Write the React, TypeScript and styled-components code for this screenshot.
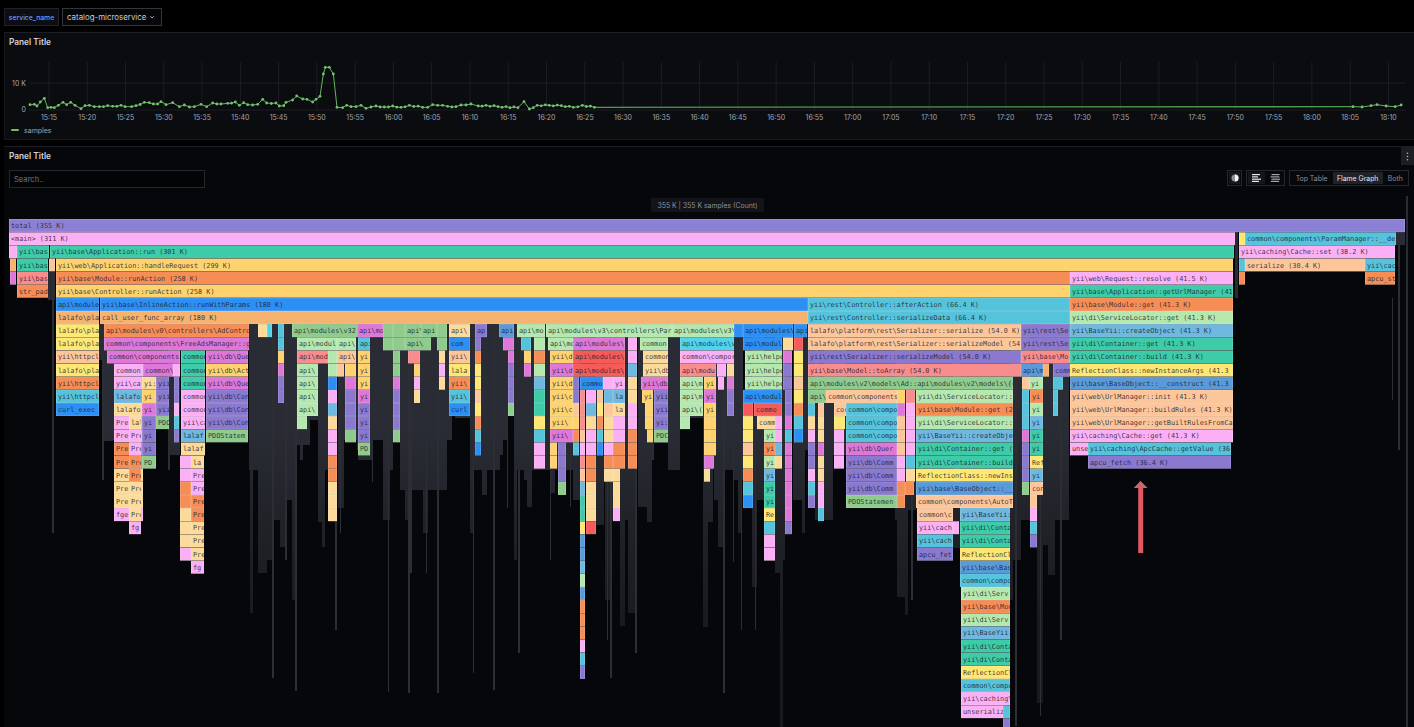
import React from 'react';
import styled, { createGlobalStyle } from 'styled-components';

const GlobalStyle = createGlobalStyle`
  html, body {
    margin: 0;
    background: #000;
    font-family: Inter, "Liberation Sans", sans-serif;
    overflow: hidden;
  }
`;

// ---- time series ----
const TICK_COUNT = 36;
const tickX = (i: number) => 48 + 38.27 * i;
const tickLabel = (i: number) => {
  const total = 15 * 60 + 15 + i * 5;
  return `${Math.floor(total / 60)}:${String(total % 60).padStart(2, '0')}`;
};

// traced from the reference, in 3x crop units
const SERIES_A = [87,314,100,313,108,318,118,306,130,295,140,323,150,322,160,323,172,316,186,307,197,314,209,307,222,316,240,326,252,317,265,316,280,320,295,320,320,317,335,319,360,316,372,320,392,320,405,317,430,307,445,308,457,312,470,312,480,305,495,314,515,308,535,320,550,315,565,321,580,320,600,313,617,320,635,309,660,312,680,310,703,306,715,316,728,308,740,314,770,313,785,298,797,309,825,309,835,318,848,317,855,307,875,300,887,288,905,297,918,298,935,306,945,298,957,289,967,222,973,202,985,202,997,222,1008,322,1025,323,1037,316,1050,320,1065,320,1080,316,1095,325,1110,321,1125,318,1150,321,1175,318,1200,322,1225,316,1265,322,1280,322,1295,314,1310,316,1325,316,1340,319,1365,320,1380,315,1410,312];
const SERIES_B = [12,318,25,316,45,320,78,323,88,305,97,327,110,316,130,316,150,317,170,322,185,316,205,322];
const SERIES_C = [1465,320,1480,321,1495,317,1505,314,1520,318,1535,320,1545,315];

// the crops only give the turning points, so put the missing samples back in between
const densify = (pts: [number, number][]) => {
  const out: [number, number][] = [];
  pts.forEach((p, i) => {
    const next = pts[i + 1];
    out.push(p);
    if (!next) return;
    const steps = Math.floor((next[0] - p[0]) / 3.8);
    for (let s = 1; s < steps; s++) {
      const t = s / steps;
      out.push([p[0] + (next[0] - p[0]) * t, p[1] + (next[1] - p[1]) * t + (s % 2 ? 0.5 : -0.5)]);
    }
  });
  return out;
};

const toPoints = () => {
  const pts: [number, number][] = [];
  for (let i = 0; i < SERIES_A.length; i += 2) pts.push([SERIES_A[i] / 3, SERIES_A[i + 1] / 3]);
  for (let i = 0; i < SERIES_B.length; i += 2) pts.push([470 + SERIES_B[i] / 1.661, SERIES_B[i + 1] / 3]);
  return densify(pts);
};
const toTail = () => {
  const pts: [number, number][] = [];
  for (let i = 0; i < SERIES_C.length; i += 2) pts.push([470 + SERIES_C[i] / 1.661, SERIES_C[i + 1] / 3]);
  return pts;
};

// ---- flame graph ----
const COLORS: Record<string, string> = {
  v: '#8c7fd6', P: '#fbb0f5', T: '#3dcba8', Y: '#fdd26f', O: '#f68d55', B: '#2c8ff4',
  A: '#f6b26f', L: '#b5e8ae', G: '#8ecb8c', E: '#fdc69a', C: '#55c3db', S: '#6fb8e0',
  R: '#f98c8c', r: '#f55b58', M: '#5a9ad9', m: '#de78d8', y: '#fee873', U: '#8a79cf',
  t: '#fcdb9a', c: '#50d4ee',
};

const ROW_TOP = 219;
const ROW_H = 13.14;
const CHAR_W = 4.12;

// row x0 x1 then the frames going down from that row, split by |
const FRAMES = String.raw`
0 9 1405 v total (355 K)
1 9 1235 P <main> (311 K)
1 1239 1245 y
1 1245 1396 C common\components\ParamManager::__destruct
2 9 17 P
2 17 49 T yii\bas
2 50 1234 T yii\base\Application::run (301 K)
2 1239 1395 P yii\caching\Cache::set (38.2 K)
3 10 16 A|m
3 17 48 T yii\bas|R yii\bas|O str_pad
3 49 55 E
3 56 1233 Y yii\web\Application::handleRequest (299 K)
3 1239 1245 C|O
3 1245 1365 E serialize (30.4 K)
3 1365 1395 C yii\cac|O apcu_st
4 56 1070 O yii\base\Module::runAction (258 K)|Y yii\base\Controller::runAction (258 K)
4 1070 1233 P yii\web\Request::resolve (41.5 K)|T yii\base\Application::getUrlManager (41.3 K)|O yii\base\Module::get (41.3 K)|L yii\di\ServiceLocator::get (41.3 K)|S yii\BaseYii::createObject (41.3 K)|T yii\di\Container::get (41.3 K)|T yii\di\Container::build (41.3 K)|y ReflectionClass::newInstanceArgs (41.3 K)|M yii\base\BaseObject::__construct (41.3 K)|E yii\web\UrlManager::init (41.3 K)|E yii\web\UrlManager::buildRules (41.3 K)|E yii\web\UrlManager::getBuiltRulesFromCache|P yii\caching\Cache::get (41.3 K)
17 1070 1088 P unse
17 1088 1231 C yii\caching\ApcCache::getValue (36.4 K)|U apcu_fetch (36.4 K)
6 56 99 B api\module|A lalafo\pla|y lalafo\pla|y lalafo\pla|E yii\httpcl|y lalafo\pla|O yii\httpcl|C yii\httpcl|B curl_exec
6 100 808 B yii\base\InlineAction::runWithParams (180 K)|A call_user_func_array (180 K)
6 808 1070 C yii\rest\Controller::afterAction (66.4 K)|C yii\rest\Controller::serializeData (66.4 K)
8 104 249 O api\modules\v0\controllers\AdController|m common\components\FreeAdsManager::get
10 107 180 m common\components
11 114 143 P common|P yii\ca|S lalafo|t lalafo|P Pre|P Pre|O Pre|O Pre|t Pre|t Pre|t Pre|P fge
11 143 173 m common\
11 173 180 P
12 142 156 t yi:|Y yi|m yi|U yi|U yi|U yi|G PD
12 156 169 U yii|U yii|U yii|G PDO
12 174 179 U|U|P|C|U
10 181 205 T common|T common|T common|P common|P common|P yii\ca|S lalaf|t lalaf
10 206 248 m yii\db\Que|Y yii\db\Act|m yii\db\Que|U yii\db\Con|U yii\db\Con|U yii\db\Con|G PDOStatem
15 129 141 t lal|P Pre|P Pre|O Pre|O Pre|t Pre|t Pre|t Pre|P fg
18 180 191 P|P|O|O|t|t|t|P
18 191 204 t la|P Pre|P Pre|O Pre|O Pre|t Pre|t Pre|t Pre|P fg
8 258 267 t
8 267 272 c
8 278 284 C|C|Y|m|U|U
8 292 357 G api\modules\v32
9 297 337 L api\modul
9 337 356 L api\
10 297 328 R api\mod
10 328 337 L|L|B|P|S|t|P|P|O|O|t|t|t
10 337 356 E api\
11 337 344 E
11 345 356 Y|m|U|U|U|G
11 297 318 L api\|L api\|L api\|L api\
15 297 307 L
8 357 383 m api\mo
9 358 370 C api|Y yi|Y yi|Y yi|m yi|U yi|U yi|U yi|G PD
8 383 393 G|G
8 393 405 G|G
10 393 400 G|G|m|U|U|U|G
8 405 421 G api\
9 405 431 G api\
10 408 420 R
11 414 420 Y|P|t
8 421 437 G api
8 437 447 G|G
10 439 445 t|P|t
8 449 470 t api\|B com|E yii\|y lala|O yii\|C yii\|B curl
8 475 487 U ap
9 475 481 U|O|y|y|E|y|O|C|B
8 499 514 M api
9 503 514 m
10 508 514 m|U|U|U|G
8 517 545 L api\mo
9 521 531 C
10 524 531 Y|m
9 534 545 L|O|L|S|T|T|y|C|P|P
8 546 672 L api\modules\v3\controllers\Par
8 672 734 L api\modules\v3\
8 734 743 B
8 743 793 B api\modules\
8 794 807 B api
9 548 573 L api\mo
10 550 573 Y yii\d|m yii\d|Y yii\d|Y yii\c|Y yii\c|Y yii\
16 550 573 m yii\
17 550 557 Y|Y
17 558 566 U|U|U|G
9 573 625 m api\modules\
10 573 625 r api\modules\|r api\modules\
12 573 579 U|U|E|Y|O|C
12 580 603 B commo
13 580 585 R|R|R|E|P|R|E|S|T|T|y|M|M|S|L|M|O|O|O|P|C|U
13 586 596 P|S|t|P|P|O|O|t|t|t|r
13 597 603 E|y|O|C|B
12 603 613 P
13 604 613 S|E|t|t|P|O|t
12 613 625 P yi:|S la|t la|P|P|O|O
19 613 620 t|t|t|P
9 628 637 P|P|S|t|t|P|P|O|O|O
9 640 668 L common
10 643 668 t common|t yii\db
12 641 668 m yii\db
13 642 653 Y yi:
14 645 653 Y|Y
16 647 653 Y
13 654 668 U yii|U yii|U yi:|G PDC
9 680 734 c api\modules\v
10 680 734 P common\compor
11 680 716 R api\modu
11 717 726 P
12 718 724 P
11 727 734 t|m|U|U
12 680 703 L api\m|L api\m|L api\(
15 680 690 L
12 704 716 Y yi|m yi:|Y yi|Y|Y|Y
18 704 714 m
19 704 710 t
9 743 782 B api\modul
9 783 793 t
10 745 782 L yii\helpe|L yii\helpe|L yii\helpe
13 743 782 B api\modul
14 743 753 r|y|y|E|y|O|C|B
14 754 782 r commo
15 757 775 t comm
16 764 775 L yi|O yi|L yi|S yi|T yi|T yi|y Re|C|P|P
15 775 782 P|P|S|t
10 783 792 m|U|U
13 785 792 U|U|m|C|m|m|m|m|m|m|U
9 794 803 r|y|y|E|y|O|C|B
8 808 1021 E lalafo\platform\rest\Serializer::serialize (54.0 K)|E lalafo\platform\rest\Serializer::serializeModel (54.0 K)|U yii\rest\Serializer::serializeModel (54.0 K)|R yii\base\Model::toArray (54.0 K)
8 1021 1070 U yii\rest\Se|U yii\rest\Se|R yii\base\Mo
12 808 1013 G api\modules\v2\models\Ad::api\modules\v2\models\{closure}
13 808 826 G api\
13 826 897 E common\components\Ad
14 808 815 C|t|P|U|U|P|C|U
14 818 824 E|t|t|m|t|t|P|P|C
14 834 846 E cor
15 834 845 y
16 834 844 P|P|P
14 846 897 C common\compo|C common\compo|C common\compo|m yii\db\Quer|U yii\db\Comm|U yii\db\Comm|U yii\db\Comm|G PDOStatemen
13 897 905 Y|m|E|E|E|P|P|O|O
13 906 915 R|P|P|P|P|C|t
20 905 914 O
13 916 1013 L yii\di\ServiceLocator::get (41.3 K)|O yii\base\Module::get (26.1 K)|L yii\di\ServiceLocator::get (41.3 K)|S yii\BaseYii::createObject (41.3 K)|T yii\di\Container::get (41.3 K)|T yii\di\Container::build (41.3 K)|y ReflectionClass::newInstance|M yii\base\BaseObject::__construct|E common\components\AutoTagger
22 917 953 E common\c:|P yii\cach|C yii\cach|U apcu_fet
23 953 959 P
22 960 1010 S yii\BaseYii:|T yii\di\Conta|T yii\di\Conta|y ReflectionCl|M yii\base\Bas|C common\compo
28 961 1010 L yii\di\Serv|O yii\base\Mod|L yii\di\Serv|S yii\BaseYii:|T yii\di\Conta|T yii\di\Conta|y ReflectionCl|C common\compo|P yii\caching\
37 961 1003 P unserializ
37 1003 1010 C
38 1003 1010 U
11 1021 1043 M api\m
11 1043 1049 A
11 1053 1070 U comm
12 1022 1029 E|C|C|C|m|U|U|U|G
12 1029 1043 L yi
13 1030 1043 O yi|L yi|S yi|T yi|T yi|y Ref|S yi|E con
21 1030 1037 E|P|C|U
12 1053 1063 C
13 1053 1058 C|C
`;

type Frame = { row: number; x0: number; x1: number; color: string; text: string };

const parseFrames = (): Frame[] => {
  const out: Frame[] = [];
  FRAMES.trim().split('\n').forEach((line) => {
    const [r, a, b, ...rest] = line.split(' ');
    const x0 = Number(a);
    const x1 = Number(b);
    rest.join(' ').split('|').forEach((item, i) => {
      // only as many characters as the frame can show
      const text = item.slice(2, 2 + Math.ceil((x1 - x0 - 3) / CHAR_W));
      out.push({ row: Number(r) + i, x0, x1, color: COLORS[item[0]], text });
    });
  });
  return out;
};

// x0, x1, bottom, top
const GREY: number[][] = [
  [48,55,300,272],[52,54,533,272],[99,104,360],[104,113,441],[102,104,480],[113,114,440],[170,180,455],[168,170,470],
  [249,258,470],[258,267,573],[267,272,560],[272,274,678],[274,280,520],[280,285,547],[285,287,560],[287,292,500],
  [292,296,600],[295,297,691],[250,253,613],[297,310,445],[300,303,460],[310,318,420],[318,322,522],[322,325,547],
  [325,329,470],[329,336,522],[335,337,630],[338,344,508],[344,357,440],[340,341,533],[357,358,450],[358,372,460],
  [372,373,482],[370,383,440],[383,390,520],[388,389,692],[390,393,470],[393,400,440],[400,447,490],[405,412,520],
  [408,410,693],[410,412,573],[423,428,533],[426,427,573],[437,439,693],[447,452,440],[455,470,418],[470,474,533],
  [473,474,673],[474,483,470],[482,487,495],[487,493,470],[493,495,690],[495,500,470],[500,503,455],[503,508,440],
  [507,508,508],[508,514,405],[514,517,560],[518,520,653],[517,524,470],[524,527,480],[527,532,507],[532,545,470],
  [545,550,470],[550,555,493],[550,551,560],[555,558,470],[558,566,490],[566,573,470],[570,571,507],[573,580,500],
  [596,604,525],[605,612,600],[610,612,678],[607,608,640],[612,620,520],[620,625,626],[625,628,520],[628,637,613],
  [635,637,653],[638,647,507],[647,652,522],[652,654,460],[653,680,443],[668,680,470],[680,690,400],[690,704,418],
  [703,708,627],[708,713,522],[714,718,500],[718,725,547],[723,725,693],[725,733,470],[733,734,562],[734,743,480],
  [738,741,533],[741,742,630],[752,757,587],[755,756,630],[757,764,500],[782,785,560],[775,782,573],[780,783,727],
  [793,803,500],[802,805,533],[803,808,450],[815,818,520],[824,833,520],[833,846,455],[895,898,520],[897,906,597],
  [905,908,615],[906,916,510],[911,913,600],[953,960,548],[1010,1013,600],[1013,1021,560],[1015,1017,726],[1021,1030,520],
  [1037,1043,703],[1040,1041,716],[1043,1048,545],[1048,1055,575],[1055,1069,520],[1060,1062,640],[1235,1238,298,232],
  [1396,1405,245,232],[1398,1400,450,245],[1392,1393,400,298],
];

const flameFrames = parseFrames();
const chartPoints = toPoints();
const chartTail = toTail();

// ---- small drawings ----
const SchemeIcon = () => (
  <svg width="8" height="8" viewBox="0 0 8 8">
    <circle cx="4" cy="4" r="3.5" fill="#8d8d98" />
    <path d="M4 .5a3.5 3.5 0 0 1 0 7z" fill="#f2f2f2" />
  </svg>
);

const AlignIcon = ({ stagger }: { stagger: boolean }) => (
  <svg width="10" height="8" viewBox="0 0 10 8">
    <rect x={stagger ? 0 : 1.5} y="0" width="8" height="1.2" fill="currentColor" />
    <rect x={stagger ? 0 : 0.5} y="2.3" width={stagger ? 6 : 9} height="1.2" fill="currentColor" />
    <rect x={stagger ? 0 : 1.5} y="4.6" width="9" height="1.2" fill="currentColor" />
    <rect x={stagger ? 0 : 1} y="6.8" width={stagger ? 7 : 8} height="1.2" fill="currentColor" />
  </svg>
);

const App = () => {
  return (
    <>
      <GlobalStyle />
      <Page>
        <VariableBar>
          <VariableLabel>service_name</VariableLabel>
          <VariableValue>
            catalog-microservice
            <svg width="6" height="6" viewBox="0 0 6 6">
              <path d="M1.2 2.2 3 4l1.8-1.8" fill="none" stroke="#ccccdc" strokeWidth=".8" />
            </svg>
          </VariableValue>
        </VariableBar>

        <SeriesPanel>
          <PanelTitle>Panel Title</PanelTitle>
          <ChartSvg width="1410" height="74" viewBox="4 50 1410 74">
            {Array.from({ length: TICK_COUNT }, (_, i) => (
              <g key={i}>
                <GridLine x1={tickX(i)} x2={tickX(i)} y1={62} y2={110} />
                <AxisText x={tickX(i)} y={120} textAnchor="middle">{tickLabel(i)}</AxisText>
              </g>
            ))}
            <GridLine x1={28} x2={1405} y1={83} y2={83} />
            <GridLine x1={28} x2={1405} y1={110} y2={110} />
            <AxisText x={25} y={85.5} textAnchor="end">10 K</AxisText>
            <AxisText x={25} y={112} textAnchor="end">0</AxisText>
            <SeriesLine points={chartPoints.map((p) => p.join(',')).join(' ')} />
            <TailLine points={`${chartPoints[chartPoints.length - 1].join(',')} ${chartTail[0].join(',')}`} />
            <SeriesLine points={chartTail.map((p) => p.join(',')).join(' ')} />
            {[...chartPoints, ...chartTail].map((p, i) => (
              <SeriesDot key={i} cx={p[0]} cy={p[1]} r={1.4} />
            ))}
          </ChartSvg>
          <Legend>
            <LegendSwatch />
            samples
          </Legend>
        </SeriesPanel>

        <FlamePanel>
          <FlameHeader>
            <PanelTitle>Panel Title</PanelTitle>
            <KebabButton>
              <svg width="3" height="9" viewBox="0 0 3 9">
                <circle cx="1.5" cy="1.2" r=".8" fill="#b5b5c0" />
                <circle cx="1.5" cy="4.5" r=".8" fill="#b5b5c0" />
                <circle cx="1.5" cy="7.8" r=".8" fill="#b5b5c0" />
              </svg>
            </KebabButton>
          </FlameHeader>
          <Toolbar>
            <SearchInput placeholder="Search.." readOnly />
            <ToolbarRight>
              <IconGroup>
                <IconButton $active $narrow><SchemeIcon /></IconButton>
              </IconGroup>
              <IconGroup>
                <IconButton $active><AlignIcon stagger /></IconButton>
                <IconButton><AlignIcon stagger={false} /></IconButton>
              </IconGroup>
              <IconGroup>
                <ViewButton>Top Table</ViewButton>
                <ViewButton $active>Flame Graph</ViewButton>
                <ViewButton>Both</ViewButton>
              </IconGroup>
            </ToolbarRight>
          </Toolbar>
          <StatsRow>
            <StatsPill>355 K | 355 K samples (Count)</StatsPill>
          </StatsRow>
          <FlameSvg width="1410" height="508" viewBox="4 219 1410 508">
            <defs>
              <linearGradient id="greyFade" gradientUnits="userSpaceOnUse" x1="0" y1="430" x2="0" y2="640">
                <stop offset="0" stopColor="#2a2c35" />
                <stop offset="0.45" stopColor="#202228" />
                <stop offset="1" stopColor="#17191d" />
              </linearGradient>
            </defs>
            {GREY.map(([x0, x1, bottom, top = 324], i) => (
              <GreyBar key={i} x={x0} y={top} width={x1 - x0} height={bottom - top} $thin={x1 - x0 < 3} />
            ))}
            {flameFrames.map((f, i) => (
              <svg key={i} x={f.x0} y={ROW_TOP + f.row * ROW_H} width={f.x1 - f.x0} height={ROW_H}>
                <FrameBox width={f.x1 - f.x0} height={ROW_H} fill={f.color} />
                {f.text && <FrameText x={2} y={9.1}>{f.text}</FrameText>}
              </svg>
            ))}
            <path d="M1140.5 481 1134 488h4.2v65h5v-65h4.3z" fill="#df5a60" />
            <path d="M1140.5 481 1134 488h13z" fill="#c9666c" />
          </FlameSvg>
          <ScrollThumb />
        </FlamePanel>
      </Page>
    </>
  );
};

export default App;

const Page = styled.div`
  width: 1414px;
  height: 727px;
  overflow: hidden;
  background: #000;
  display: flex;
  flex-direction: column;
`;

const VariableBar = styled.div`
  display: flex;
  gap: 3px;
  height: 32px;
  padding: 8px 0 0 4px;
  box-sizing: border-box;
`;

const VariableLabel = styled.div`
  box-sizing: border-box;
  width: 55px;
  height: 18px;
  display: flex;
  align-items: center;
  justify-content: center;
  background: #0c0e13;
  border: 1px solid #1f2227;
  color: #6e9fff;
  font-size: 6.8px;
  font-weight: 500;
`;

const VariableValue = styled.div`
  box-sizing: border-box;
  width: 100px;
  height: 18px;
  display: flex;
  align-items: center;
  gap: 3px;
  padding-left: 4px;
  background: #050608;
  border: 1px solid #33363d;
  color: #ccccdc;
  font-size: 7.9px;
`;

const SeriesPanel = styled.section`
  margin-left: 4px;
  height: 108px;
  box-sizing: border-box;
  background: #0a0c10;
  border-top: 1px solid #1c1e23;
  border-bottom: 1px solid #16181c;
  border-left: 1px solid #16181c;
  display: flex;
  flex-direction: column;
`;

const PanelTitle = styled.div`
  height: 17px;
  padding: 4px 0 0 4px;
  box-sizing: border-box;
  color: #d3d3dc;
  font-size: 8.3px;
  font-weight: 600;
  line-height: 10px;
`;

const ChartSvg = styled.svg`
  display: block;
  flex: none;
`;

const GridLine = styled.line`
  stroke: #22252a;
  stroke-width: 0.7;
`;

const AxisText = styled.text`
  fill: #a4a5ae;
  font-size: 7px;
  font-family: Inter, "Liberation Sans", sans-serif;
`;

const SeriesLine = styled.polyline`
  fill: none;
  stroke: #62b65f;
  stroke-width: 1;
`;

const TailLine = styled(SeriesLine)`
  stroke-width: 1.3;
  stroke: #4f9c4e;
`;

const SeriesDot = styled.circle`
  fill: #73c26c;
`;

const Legend = styled.div`
  display: flex;
  align-items: center;
  gap: 5px;
  padding-left: 6px;
  height: 12px;
  color: #a4a5ae;
  font-size: 7px;
`;

const LegendSwatch = styled.span`
  width: 8px;
  height: 2px;
  border-radius: 1px;
  background: #73bf69;
`;

const FlamePanel = styled.section`
  position: relative;
  margin: 6px 0 0 4px;
  flex: 1;
  box-sizing: border-box;
  background: #05070b;
  border-top: 1px solid #1c1e23;
  display: flex;
  flex-direction: column;
`;

const FlameHeader = styled.div`
  display: flex;
  justify-content: space-between;
  height: 19px;
  padding-left: 1px;
`;

const KebabButton = styled.div`
  width: 13px;
  height: 18px;
  display: flex;
  align-items: center;
  justify-content: center;
  background: #1c1e23;
`;

const Toolbar = styled.div`
  display: flex;
  justify-content: space-between;
  align-items: flex-start;
  padding: 4px 5px 0 5px;
  height: 28px;
  box-sizing: border-box;
`;

const SearchInput = styled.input`
  box-sizing: border-box;
  width: 196px;
  height: 18px;
  padding: 0 4px;
  background: #030406;
  border: 1px solid #25272d;
  color: #ccc;
  font-family: inherit;
  font-size: 7.6px;
  outline: none;
  &::placeholder {
    color: #74757e;
  }
`;

const ToolbarRight = styled.div`
  display: flex;
  gap: 4px;
`;

const IconGroup = styled.div`
  display: flex;
  align-items: center;
  height: 14px;
  padding: 0 1px;
  gap: 1px;
  border: 1px solid #25272d;
  background: #06080c;
`;

const IconButton = styled.div<{ $active?: boolean; $narrow?: boolean }>`
  width: ${(p) => (p.$narrow ? '11px' : '17px')};
  height: 12px;
  display: flex;
  align-items: center;
  justify-content: center;
  color: ${(p) => (p.$active ? '#e8e8ee' : '#a4a5ae')};
  background: ${(p) => (p.$active ? '#15171c' : 'transparent')};
`;

const ViewButton = styled.div<{ $active?: boolean }>`
  display: flex;
  align-items: center;
  height: 12px;
  padding: 0 4.2px;
  font-size: 6.9px;
  white-space: nowrap;
  color: ${(p) => (p.$active ? '#e8e8ee' : '#8f909a')};
  background: ${(p) => (p.$active ? '#1f2227' : 'transparent')};
`;

const StatsRow = styled.div`
  display: flex;
  justify-content: center;
  height: 25px;
  padding: 4px 3px 0 0;
  box-sizing: border-box;
`;

const StatsPill = styled.div`
  height: 14px;
  display: flex;
  align-items: center;
  padding: 0 6px;
  background: #121419;
  color: #8e8f99;
  font-size: 6.9px;
  white-space: nowrap;
`;

const FlameSvg = styled.svg`
  display: block;
  flex: none;
`;

const GreyBar = styled.rect<{ $thin?: boolean }>`
  fill: ${(p) => (p.$thin ? '#2c2e34' : 'url(#greyFade)')};
`;

const FrameBox = styled.rect`
  stroke: rgba(255, 255, 255, 0.32);
  stroke-width: 0.8;
`;

const FrameText = styled.text`
  fill: #1c1f30;
  fill-opacity: 0.88;
  font-family: "DejaVu Sans Mono", "Liberation Mono", monospace;
  font-size: 6.85px;
`;

const ScrollThumb = styled.div`
  position: absolute;
  top: 49px;
  right: 6px;
  bottom: 0;
  width: 2px;
  background: #2a2c33;
`;
